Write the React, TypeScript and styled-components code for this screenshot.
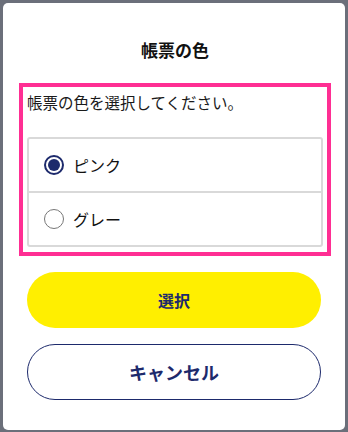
import React, { useState } from "react";
import styled, { createGlobalStyle } from "styled-components";

const GlobalStyle = createGlobalStyle`
  html, body {
    margin: 0;
    padding: 0;
    background: #6b6f7a;
    font-family: "Noto Sans CJK JP", "Noto Sans", sans-serif;
  }
`;

const Page = styled.div`
  width: 348px;
  height: 432px;
  padding: 3px;
  box-sizing: border-box;
`;

const Modal = styled.div`
  height: 427px;
  background: #ffffff;
  border-radius: 5px;
  padding: 35px 14px 0 16px;
  box-sizing: border-box;
`;

const Title = styled.h2`
  margin: 0;
  font-size: 17px;
  line-height: 24px;
  font-weight: 700;
  text-align: center;
  color: #111111;
`;

const Highlight = styled.div`
  margin-top: 21px;
  border: 4px solid #ff2e93;
  padding: 4px 4px 5px 4px;
`;

const Lead = styled.p`
  margin: 0;
  font-size: 15.5px;
  line-height: 22px;
  color: #1a1a1a;
`;

const OptionList = styled.div`
  margin-top: 24px;
  border: 2px solid #d9d9d9;
  border-radius: 3px;
`;

const Option = styled.label<{ $last?: boolean }>`
  display: flex;
  align-items: center;
  gap: 9px;
  height: 52px;
  padding-left: 15px;
  border-bottom: ${(p) => (p.$last ? "none" : "2px solid #d9d9d9")};
  font-size: 16px;
  color: #111111;
  cursor: pointer;
`;

const Radio = styled.span<{ $checked: boolean }>`
  width: 20px;
  height: 20px;
  box-sizing: border-box;
  border-radius: 50%;
  border: ${(p) => (p.$checked ? "2px solid #1d2a6c" : "1.5px solid #777777")};
  display: flex;
  align-items: center;
  justify-content: center;
  &::after {
    content: "";
    width: 12px;
    height: 12px;
    border-radius: 50%;
    background: ${(p) => (p.$checked ? "#1d2a6c" : "transparent")};
  }
`;

const Actions = styled.div`
  display: flex;
  flex-direction: column;
  gap: 16px;
  margin-top: 16px;
  padding: 0 10px 0 8px;
`;

const Button = styled.button<{ $primary?: boolean }>`
  height: 56px;
  border-radius: 28px;
  font-family: inherit;
  font-weight: 700;
  color: #1d2a6c;
  font-size: ${(p) => (p.$primary ? "16px" : "18px")};
  background: ${(p) => (p.$primary ? "#ffef00" : "#ffffff")};
  border: ${(p) => (p.$primary ? "none" : "1px solid #1d2a6c")};
  cursor: pointer;
`;

const colors = ["ピンク", "グレー"];

export default function App() {
  const [selected, setSelected] = useState("ピンク");
  return (
    <>
      <GlobalStyle />
      <Page>
        <Modal>
          <Title>帳票の色</Title>
          <Highlight>
            <Lead>帳票の色を選択してください。</Lead>
            <OptionList>
              {colors.map((c, i) => (
                <Option
                  key={c}
                  $last={i === colors.length - 1}
                  onClick={() => setSelected(c)}
                >
                  <Radio $checked={selected === c} />
                  {c}
                </Option>
              ))}
            </OptionList>
          </Highlight>
          <Actions>
            <Button $primary>選択</Button>
            <Button>キャンセル</Button>
          </Actions>
        </Modal>
      </Page>
    </>
  );
}
